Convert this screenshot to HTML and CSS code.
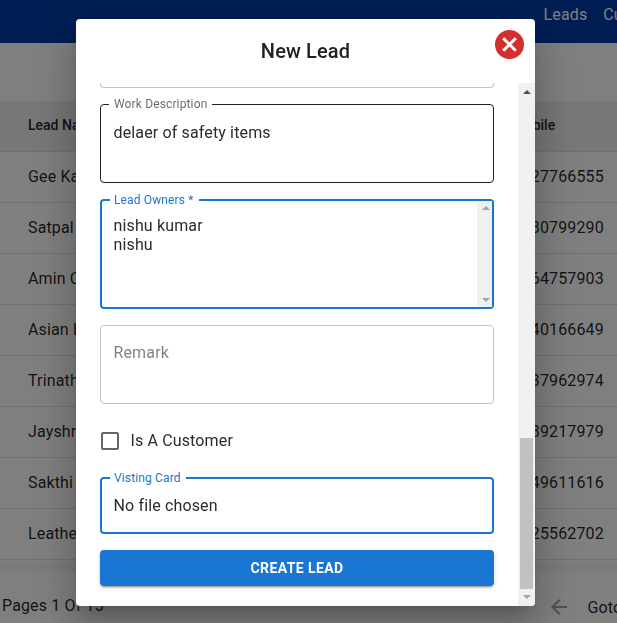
FILE: index.html
```html
<!DOCTYPE html>
<html lang="en">
<head>
<meta charset="utf-8">
<title>New Lead</title>
<link rel="stylesheet" href="styles.css">
</head>
<body>
<div class="page">
  <nav class="navbar"><span>Leads</span><span>Customers</span></nav>
  <main class="table">
    <div class="row head"><span>Lead Name</span><span>Mobile</span></div>
    <div class="row"><span>Gee Kay</span><span>9927766555</span></div>
    <div class="row"><span>Satpal</span><span>9980799290</span></div>
    <div class="row"><span>Amin C</span><span>9964757903</span></div>
    <div class="row"><span>Asian L</span><span>9940166649</span></div>
    <div class="row"><span>Trinath</span><span>9937962974</span></div>
    <div class="row"><span>Jayshree</span><span>9989217979</span></div>
    <div class="row"><span>Sakthi</span><span>9949611616</span></div>
    <div class="row"><span>Leather</span><span>9925562702</span></div>
    <div class="track"></div>
  </main>
  <footer class="pager">
    <span class="count">Pages 1 Of 15</span>
    <svg class="prev" width="24" height="24" viewBox="0 0 24 24"><path d="M20 11H7.83l5.59-5.59L12 4l-8 8 8 8 1.41-1.41L7.83 13H20v-2z"/></svg>
    <span class="goto">Goto</span>
  </footer>
</div>
<div class="backdrop">
  <section class="dialog">
    <header class="dialog-head">
      <h2>New Lead</h2>
      <svg class="close" width="29" height="29" viewBox="0 0 29 29"><circle cx="14.5" cy="14.5" r="14.5"/><path d="M8.2 8.2l12.6 12.6M20.8 8.2L8.2 20.8"/></svg>
    </header>
    <div class="dialog-body">
      <form class="form">
        <div class="field cut"></div>
        <div class="field area dark"><label class="legend">Work Description</label>delaer of safety items</div>
        <div class="field owners focus"><label class="legend">Lead Owners *</label>
          <div class="options"><span>nishu kumar</span><span>nishu</span></div>
          <div class="list-bar"><i class="up"></i><i class="down"></i></div>
        </div>
        <div class="field area placeholder">Remark</div>
        <div class="check"><span class="box"></span>Is A Customer</div>
        <div class="field file focus"><label class="legend">Visting Card</label>No file chosen</div>
        <button type="button" class="submit">CREATE LEAD</button>
      </form>
      <div class="scrollbar"><i class="up"></i><div class="thumb"></div><i class="down"></i></div>
    </div>
  </section>
</div>
</body>
</html>
```

FILE: styles.css
```css
* { box-sizing: border-box; }
body {
  margin: 0;
  height: 623px;
  overflow: hidden;
  font: 400 16px/24px Roboto, sans-serif;
  letter-spacing: 0.14px;
  color: rgba(0, 0, 0, 0.87);
}
.page { width: 617px; height: 623px; overflow: hidden; background: #fff; }
.navbar {
  display: flex;
  gap: 16px;
  height: 43px;
  padding: 3px 0 0 543.5px;
  background: #003aa6;
  color: #fff;
}
.table { padding-top: 58px; }
.row {
  display: grid;
  grid-template-columns: 484.5px 1fr;
  align-items: center;
  height: 51px;
  padding-left: 28px;
  border-bottom: 1px solid #e0e0e0;
}
.row span { white-space: nowrap; }
.head { background: #eee; font-size: 14px; font-weight: 500; padding-bottom: 2px; letter-spacing: 0; }
.track { height: 10px; margin-top: 2px; background: #f6f6f6; }
.pager { display: flex; align-items: center; height: 66px; padding: 4px 0 0 2px; white-space: nowrap; }
.count { width: 545px; flex: none; margin-top: -2px; }
.prev { fill: #a0a0a0; flex: none; }
.goto { margin: 2px 0 0 16.5px; }

.backdrop {
  position: fixed;
  inset: 0;
  padding: 19px 0 0 76px;
  background: rgba(0, 0, 0, 0.5);
}
.dialog {
  width: 459px;
  height: 587px;
  overflow: hidden;
  border-radius: 4px;
  background: #fff;
  color: #2b2b2b;
  box-shadow: 0 11px 15px -7px rgba(0, 0, 0, 0.2), 0 24px 38px 3px rgba(0, 0, 0, 0.14), 0 9px 46px 8px rgba(0, 0, 0, 0.12);
}
.dialog-head { position: relative; height: 64px; }
h2 { margin: 0; color: #212121; font-size: 20px; font-weight: 500; line-height: 64px; text-align: center; }
.close { position: absolute; top: 11px; right: 11px; fill: #d32f2f; }
.close path { fill: none; stroke: #fff; stroke-width: 3; }
.dialog-body { display: flex; height: 523px; }
.form { flex: 1; padding: 0 24px; }

.field { position: relative; border: 1px solid #c4c4c4; border-radius: 4px; }
.cut { height: 5px; border-top: 0; border-radius: 0 0 4px 4px; }
.area { height: 79px; margin-top: 16px; padding: 16px 12.5px; }
.dark { border-color: #212121; }
.focus { border: 2px solid #1976d2; }
.legend {
  position: absolute;
  top: -8px;
  left: 8px;
  padding: 0 5px;
  background: #fff;
  color: rgba(0, 0, 0, 0.6);
  font-size: 12px;
  line-height: 14px;
}
.focus .legend { left: 8px; padding-left: 4px; color: #1976d2; }
.placeholder { padding-top: 15px; color: rgba(0, 0, 0, 0.5); }
.owners { display: flex; justify-content: space-between; height: 110px; margin-top: 16px; }
.options { display: flex; flex-direction: column; padding: 15px 11.5px; line-height: 19px; }
.list-bar, .scrollbar { display: flex; flex-direction: column; align-items: center; background: #f1f1f1; }
.list-bar { width: 15px; justify-content: space-between; padding: 5px 0 5px 2px; }
.up, .down { border: 4px solid transparent; }
.up { border-top: 0; border-bottom-color: #a3a3a3; }
.down { border-bottom: 0; border-top-color: #a3a3a3; }
.check { display: flex; align-items: center; height: 42px; margin-top: 16px; padding-left: 1px; gap: 11.5px; }
.box { width: 18px; height: 18px; border: 2px solid #666; border-radius: 2px; }
.file { height: 57px; margin-top: 15px; padding: 15px 11.5px; }
.submit {
  display: block;
  width: 100%;
  height: 36px;
  margin-top: 16px;
  padding: 0;
  border: 0;
  border-radius: 4px;
  background: #1976d2;
  color: #fff;
  font: 700 14px/34px Roboto, sans-serif;
  letter-spacing: 0.4px;
  box-shadow: 0 3px 1px -2px rgba(0, 0, 0, 0.2), 0 2px 2px rgba(0, 0, 0, 0.14), 0 1px 5px rgba(0, 0, 0, 0.12);
}
.scrollbar { width: 17px; padding: 7px 0; justify-content: space-between; }
.scrollbar .up { border-bottom-color: #505050; }
.thumb { width: 13px; height: 151px; margin: auto 0 6px; background: #c1c1c1; }
```
